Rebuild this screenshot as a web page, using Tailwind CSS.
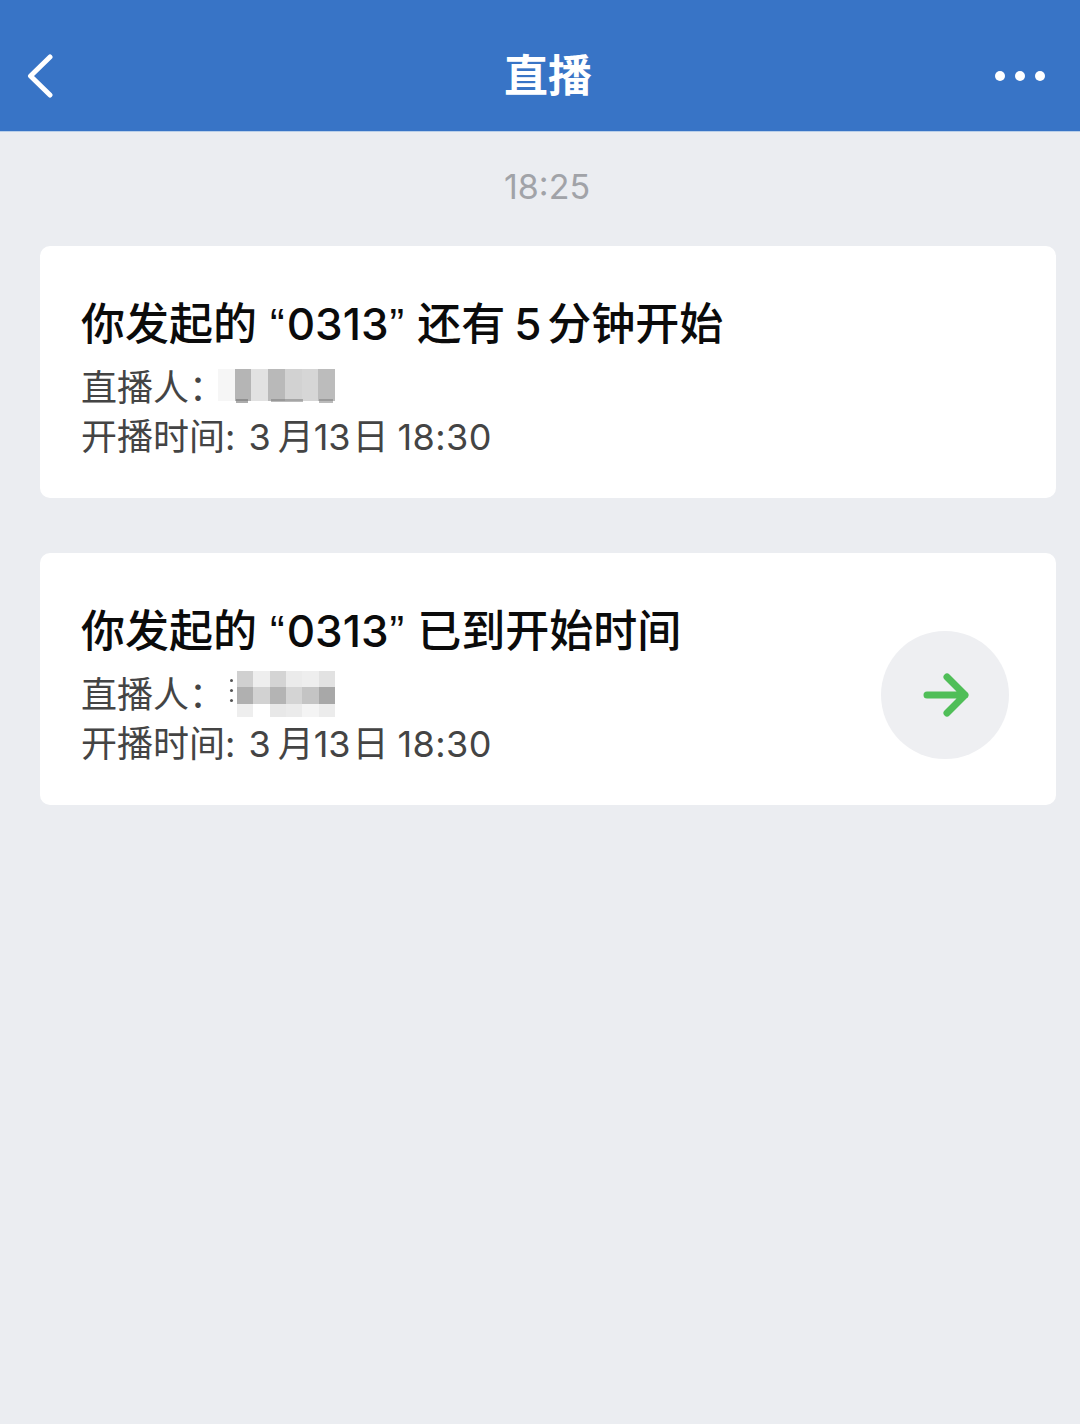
<!doctype html>
<html lang="zh"><head><meta charset="utf-8"><script src="https://cdn.jsdelivr.net/npm/@tailwindcss/browser@4"></script></head>
<body class="m-0">
<div class="w-[1080px] h-[1424px] overflow-hidden bg-[#ebedf1] font-['Inter','Noto_Sans_CJK_SC',sans-serif]">
  <header class="h-[132px] pt-[20px] bg-[#3874c6] border-b border-b-[#b9cfe9] flex items-center justify-between pl-[27px] pr-[35px] relative">
    <svg width="26" height="44" viewBox="0 0 26 44" fill="none" stroke="#fff" stroke-width="5" stroke-linecap="round" stroke-linejoin="round"><path d="M23 3 3.500 22 23 41"/></svg>
    <h1 class="absolute left-[504px] top-[46px] text-[44px] leading-[60px] font-bold text-white">直播</h1>
    <div class="flex gap-[10px]"><span class="size-[10px] rounded-full bg-white"></span><span class="size-[10px] rounded-full bg-white"></span><span class="size-[10px] rounded-full bg-white"></span></div>
  </header>
  <div class="pl-[504px] pt-[34px] h-[114px] text-[34px] leading-[42px] text-[#a1a3a8]">18:25</div>
  <main class="flex flex-col gap-[55px] pl-[40px]">
    <section class="w-[1016px] h-[252px] bg-white rounded-[10px] pl-[41px] pt-[48px]">
      <h2 class="text-[44px] leading-[60px] font-medium text-[#0b0b0b] whitespace-nowrap">你发起的<span class="ml-[13px] font-['Liberation_Sans']">“</span><span class="ml-[2px]">0313</span><span class="ml-[1px] font-['Liberation_Sans']">”</span><span class="ml-[13px]">还有</span><span class="ml-[9px]">5</span><span class="ml-[6px]">分钟开始</span></h2>
      <div class="mt-[8px] h-[50px] flex text-[36px] leading-[50px] text-[#444] relative">
        <span>直播人：</span>
        <div class="absolute left-[137px] top-[6px] w-[117px] h-[32px] flex">
          <i class="flex-1 bg-[#f6f6f6]"></i><i class="flex-1 bg-[#b5b5b5]"></i><i class="flex-1 bg-[#e2e2e2]"></i><i class="flex-1 bg-[#b9b9b9]"></i><i class="flex-1 bg-[#d2d2d2]"></i><i class="flex-1 bg-[#d6d6d6]"></i><i class="flex-1 bg-[#bcbcbc]"></i>
        </div>
        <i class="absolute left-[155px] top-[36px] w-[12px] h-[4px] bg-[#777]/60"></i>
        <i class="absolute left-[190px] top-[36px] w-[32px] h-[3px] bg-[#777]/50"></i>
        <i class="absolute left-[238px] top-[36px] w-[14px] h-[4px] bg-[#777]/50"></i>
      </div>
      <p class="text-[36px] leading-[48px] text-[#444] whitespace-nowrap">开播时间:<span class="ml-[13px]">3</span><span class="ml-[7px]">月13</span><span class="ml-[2px]">日</span><span class="ml-[9px] tracking-[0.4px]">18:30</span></p>
    </section>
    <section class="w-[1016px] h-[252px] bg-white rounded-[10px] pl-[41px] pt-[48px] relative">
      <h2 class="text-[44px] leading-[60px] font-medium text-[#0b0b0b] whitespace-nowrap">你发起的<span class="ml-[13px] font-['Liberation_Sans']">“</span><span class="ml-[2px]">0313</span><span class="ml-[1px] font-['Liberation_Sans']">”</span><span class="ml-[13px]">已到开始时间</span></h2>
      <div class="mt-[8px] h-[50px] flex text-[36px] leading-[50px] text-[#444] relative">
        <span>直播人：</span>
        <div class="absolute left-[149px] top-[9px] w-[3px] h-[3px] rounded-full bg-[#555] shadow-[0_10px_0_#555,0_20px_0_#555]"></div>
        <div class="absolute left-[156px] top-[1px] w-[98px] h-[46px] grid grid-cols-6 grid-rows-[16px_17px_13px]">
          <i class="bg-[#d0d0d0]"></i><i class="bg-[#eee]"></i><i class="bg-[#d4d4d4]"></i><i class="bg-[#ebebeb]"></i><i class="bg-[#eee]"></i><i class="bg-[#e2e2e2]"></i>
          <i class="bg-[#b0b0b0]"></i><i class="bg-[#d2d2d2]"></i><i class="bg-[#b4b4b4]"></i><i class="bg-[#d4d4d4]"></i><i class="bg-[#c4c4c4]"></i><i class="bg-[#a8a8a8]"></i>
          <i class="bg-[#eee]"></i><i class="bg-white"></i><i class="bg-[#e8e8e8]"></i><i class="bg-[#ebebeb]"></i><i class="bg-[#f4f4f4]"></i><i class="bg-[#ececec]"></i>
        </div>
      </div>
      <p class="text-[36px] leading-[48px] text-[#444] whitespace-nowrap">开播时间:<span class="ml-[13px]">3</span><span class="ml-[7px]">月13</span><span class="ml-[2px]">日</span><span class="ml-[9px] tracking-[0.4px]">18:30</span></p>
      <div class="absolute left-[841px] top-[78px] size-[128px] rounded-full bg-[#eeeff2] flex items-center justify-center">
        <svg width="48" height="46" viewBox="0 0 48 46" fill="none" stroke="#4fbe58" stroke-width="7" stroke-linecap="round" stroke-linejoin="round"><path d="M6 23h38M26 5l18 18-18 18"/></svg>
      </div>
    </section>
  </main>
</div>
</body></html>
